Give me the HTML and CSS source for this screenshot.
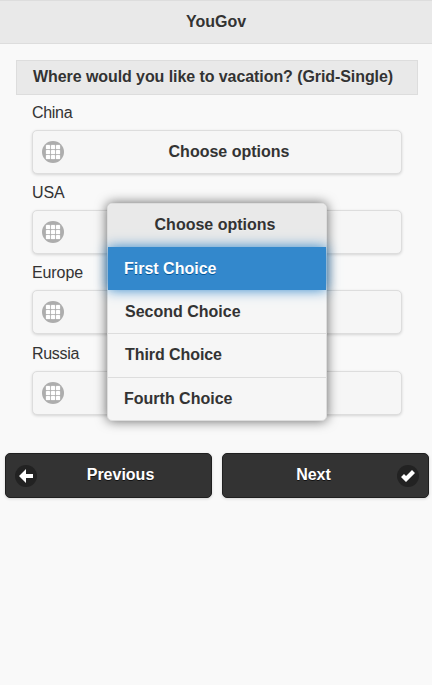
FILE: index.html
```html
<!DOCTYPE html>
<html lang="en">
<head>
<meta charset="utf-8">
<title>YouGov</title>
<link rel="stylesheet" href="styles.css">
</head>
<body>
<svg class="defs" aria-hidden="true">
  <symbol id="grid" viewBox="0 0 14 14" overflow="visible">
    <g fill="#fff" stroke="#fff" stroke-width=".25">
      <rect width="4" height="4" rx=".5"/><rect x="5" width="4" height="4" rx=".5"/><rect x="10" width="4" height="4" rx=".5"/>
      <rect y="5" width="4" height="4" rx=".5"/><rect x="5" y="5" width="4" height="4" rx=".5"/><rect x="10" y="5" width="4" height="4" rx=".5"/>
      <rect y="10" width="4" height="4" rx=".5"/><rect x="5" y="10" width="4" height="4" rx=".5"/><rect x="10" y="10" width="4" height="4" rx=".5"/>
    </g>
  </symbol>
</svg>
<header class="header"><h1>YouGov</h1></header>
<main class="content">
  <h2 class="question">Where would you like to vacation? (Grid-Single)</h2>
  <div class="fields">
    <div class="field"><label class="tight">China</label><button class="select"><span class="disc"><svg><use href="#grid"/></svg></span><span class="text">Choose options</span></button></div>
    <div class="field"><label>USA</label><button class="select"><span class="disc"><svg><use href="#grid"/></svg></span></button></div>
    <div class="field"><label>Europe</label><button class="select"><span class="disc"><svg><use href="#grid"/></svg></span></button></div>
    <div class="field last"><label class="tight">Russia</label><button class="select"><span class="disc"><svg><use href="#grid"/></svg></span></button></div>
  </div>
</main>
<nav class="nav">
  <button class="step prev"><span class="disc"><svg viewBox="0 0 14 14"><path fill="#fff" d="M7 5V0L0 7l7 7V9h7V5z"/></svg></span><span class="text">Previous</span></button>
  <button class="step next"><span class="text">Next</span><span class="disc"><svg viewBox="0 0 14 14"><path fill="#fff" d="M14 4l-3-3-6 6-2-2-3 3 5 5z"/></svg></span></button>
</nav>
<div class="popup">
  <div class="popup-title">Choose options</div>
  <ul class="choices">
    <li class="active">First Choice</li>
    <li>Second Choice</li>
    <li>Third Choice</li>
    <li>Fourth Choice</li>
  </ul>
</div>
</body>
</html>
```
FILE: styles.css
```css
* { box-sizing: border-box; }
body {
  margin: 0;
  min-height: 685px;
  background: #f9f9f9;
  color: #333;
  font: 16px/20px "Liberation Sans", Arial, sans-serif;
  text-shadow: 0 1px 0 #f3f3f3;
}
.defs { position: absolute; width: 0; height: 0; }
.header {
  height: 44px;
  padding: 11px 0;
  background: #e9e9e9;
  border: solid #ddd;
  border-width: 1px 0;
  text-align: center;
  text-shadow: 0 1px 0 #eee;
}
h1, h2 { margin: 0; font-size: 16px; line-height: 20px; font-weight: bold; }
.content { padding: 16px 14px 0 16px; }
.question {
  height: 35px;
  padding: 6px 16px;
  background: #e9e9e9;
  border: 1px solid #ddd;
  text-shadow: 0 1px 0 #eee;
  white-space: nowrap;
  letter-spacing: -.075px;
}
.fields { padding: 8px 16px 0; }
.field { height: 80px; }
.field.last { height: 72px; margin-top: 1px; }
label { display: block; height: 27px; letter-spacing: -.1px; }
label.tight { letter-spacing: -.3px; }
button {
  display: flex;
  align-items: center;
  width: 100%;
  border: 1px solid #ddd;
  border-radius: 5px;
  font: bold 16px/20px "Liberation Sans", Arial, sans-serif;
  color: inherit;
  text-shadow: inherit;
  box-shadow: 0 1px 3px rgba(0, 0, 0, .15);
}
.select { height: 44px; padding: 0 15px 0 9px; background: #f6f6f6; }
.text { flex: 1; text-align: center; }
.select .text { margin: -1px 0 0 8px; }
.disc {
  display: flex;
  align-items: center;
  justify-content: center;
  width: 22px;
  height: 22px;
  border-radius: 50%;
  background: #adadad;
}
.disc svg { width: 14px; height: 14px; overflow: visible; }
.nav { display: flex; gap: 10px; padding: 37px 3px 0 5px; }
.step {
  height: 45px;
  background: #333;
  border-color: #1f1f1f;
  color: #fff;
  text-shadow: 0 1px 0 #111;
}
.step .disc { background: #222; margin-top: 1px; }
.step .text { margin-top: -1px; }
.prev { padding: 0 15px 0 9px; }
.prev .text { margin-left: 8px; }
.next { padding: 0 9px 0 15px; }
.next .text { margin-right: 8px; }
.popup {
  position: absolute;
  left: 107px;
  top: 203px;
  width: 220px;
  height: 218px;
  border: 1px solid #ddd;
  border-radius: 5px;
  background: #f6f6f6;
  box-shadow: 0 0 12px rgba(0, 0, 0, .6);
  font-weight: bold;
}
.popup-title {
  height: 43px;
  padding: 11px 4px 0 0;
  border-radius: 4px 4px 0 0;
  background: #e9e9e9;
  text-align: center;
  text-shadow: 0 1px 0 #eee;
}
.choices { margin: 0; padding: 0; list-style: none; }
.choices li { height: 43px; padding: 12px 17px 0; }
.choices li:nth-child(3),
.choices li:nth-child(4) {
  height: 44px;
  padding-top: 11px;
  border-top: 1px solid #ddd;
}
.choices li:nth-child(3) { letter-spacing: -.07px; }
.choices li:nth-child(4) { padding-left: 16px; }
.choices .active {
  position: relative;
  padding-left: 16px;
  background: #38c;
  color: #fff;
  text-shadow: 0 1px 0 #059;
  box-shadow: 0 0 12px #38c;
}
```
